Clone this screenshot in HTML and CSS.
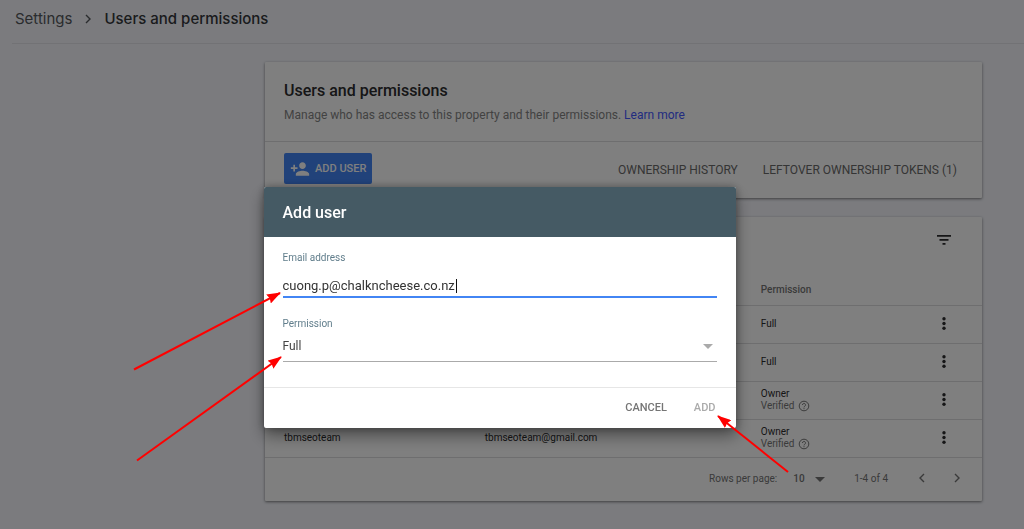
FILE: index.html
```html
<!DOCTYPE html>
<html lang="en">
<head>
<meta charset="utf-8">
<title>Users and permissions</title>
<link rel="stylesheet" href="styles.css">
</head>
<body>
<header class="topbar">
  <nav class="crumbs" aria-label="Breadcrumb">
    <a class="crumb" href="#settings">Settings</a>
    <svg class="crumb-sep" viewBox="0 0 6 10" aria-hidden="true"><path d="M1 1l4 4-4 4" fill="none" stroke="currentColor" stroke-width="1.400"/></svg>
    <span class="crumb current">Users and permissions</span>
  </nav>
</header>
<main class="content">
  <section class="card">
    <div class="intro">
      <h1 class="title">Users and permissions</h1>
      <p class="lead">Manage who has access to this property and their permissions. <a class="link" href="#learn">Learn more</a></p>
    </div>
    <div class="actions">
      <button class="add-user" type="button">
        <svg class="add-icon" viewBox="0 0 24 24" aria-hidden="true"><path fill="currentColor" d="M15 12c2.210 0 4-1.790 4-4s-1.790-4-4-4-4 1.790-4 4 1.790 4 4 4zm-9-2V7H4v3H1v2h3v3h2v-3h3v-2H6zm9 4c-2.670 0-8 1.340-8 4v2h16v-2c0-2.660-5.330-4-8-4z"/></svg>
        ADD USER
      </button>
      <button class="text-button wide history" type="button">OWNERSHIP HISTORY</button>
      <button class="text-button wide" type="button">LEFTOVER OWNERSHIP TOKENS (1)</button>
    </div>
  </section>
  <section class="card">
    <div class="filter-bar">
      <button class="icon-button" type="button" aria-label="Filter"><svg class="icon" viewBox="0 0 20 20" aria-hidden="true"><path fill="currentColor" d="M3 5h14v1.700H3zM5.500 9h9v1.700h-9zM8.500 13h3v1.700h-3z"/></svg></button>
    </div>
    <table class="users">
      <colgroup><col class="col-name"><col class="col-email"><col><col class="col-menu"></colgroup>
      <thead>
        <tr><td></td><td></td><th scope="col">Permission</th><td></td></tr>
      </thead>
      <tbody>
        <tr><td></td><td></td><td>Full</td><td><button class="icon-button" type="button" aria-label="More"><svg class="icon" viewBox="0 0 20 20" aria-hidden="true"><g fill="currentColor"><circle cx="10" cy="4.800" r="1.700"/><circle cx="10" cy="9.500" r="1.700"/><circle cx="10" cy="14.200" r="1.700"/></g></svg></button></td></tr>
        <tr><td></td><td></td><td>Full</td><td><button class="icon-button" type="button" aria-label="More"><svg class="icon" viewBox="0 0 20 20" aria-hidden="true"><g fill="currentColor"><circle cx="10" cy="4.800" r="1.700"/><circle cx="10" cy="9.500" r="1.700"/><circle cx="10" cy="14.200" r="1.700"/></g></svg></button></td></tr>
        <tr><td></td><td></td><td>Owner<span class="verified">Verified <svg class="help" viewBox="0 0 12 12" aria-hidden="true"><circle cx="6" cy="6" r="4.800"/><path d="M4.500 5a1.500 1.500 0 1 1 2.300 1.200C6.200 6.600 6 6.800 6 7.400M6 8.200v1"/></svg></span></td><td><button class="icon-button" type="button" aria-label="More"><svg class="icon" viewBox="0 0 20 20" aria-hidden="true"><g fill="currentColor"><circle cx="10" cy="4.800" r="1.700"/><circle cx="10" cy="9.500" r="1.700"/><circle cx="10" cy="14.200" r="1.700"/></g></svg></button></td></tr>
        <tr><td>tbmseoteam</td><td>tbmseoteam@gmail.com</td><td>Owner<span class="verified">Verified <svg class="help" viewBox="0 0 12 12" aria-hidden="true"><circle cx="6" cy="6" r="4.800"/><path d="M4.500 5a1.500 1.500 0 1 1 2.300 1.200C6.200 6.600 6 6.800 6 7.400M6 8.200v1"/></svg></span></td><td><button class="icon-button" type="button" aria-label="More"><svg class="icon" viewBox="0 0 20 20" aria-hidden="true"><g fill="currentColor"><circle cx="10" cy="4.800" r="1.700"/><circle cx="10" cy="9.500" r="1.700"/><circle cx="10" cy="14.200" r="1.700"/></g></svg></button></td></tr>
      </tbody>
    </table>
    <div class="pager">
      <label for="rows">Rows per page:</label>
      <span class="select-box rows-box">
        <select class="rows" id="rows"><option>10</option></select>
        <svg class="caret" viewBox="0 0 10 5" aria-hidden="true"><path fill="currentColor" d="M0 0h10L5 5z"/></svg>
      </span>
      <span class="range">1-4 of 4</span>
      <button class="icon-button" type="button" aria-label="Previous page"><svg class="icon" viewBox="0 0 20 20" aria-hidden="true"><path fill="none" stroke="currentColor" stroke-width="1.400" d="M12 5 8 9l4 4"/></svg></button>
      <button class="icon-button" type="button" aria-label="Next page"><svg class="icon" viewBox="0 0 20 20" aria-hidden="true"><path fill="none" stroke="currentColor" stroke-width="1.400" d="m8 5 4 4-4 4"/></svg></button>
    </div>
  </section>
</main>
<div class="scrim">
  <form class="dialog" role="dialog" aria-labelledby="dialog-title">
    <h2 class="dialog-title" id="dialog-title">Add user</h2>
    <div class="fields">
      <label class="label" for="email">Email address</label>
      <input class="email" id="email" type="text" value="cuong.p@chalkncheese.co.nz" autocomplete="off" spellcheck="false">
      <span class="caret-line"></span>
      <label class="label" for="permission">Permission</label>
      <span class="select-box permission-box">
        <select class="permission" id="permission"><option>Full</option></select>
        <svg class="caret" viewBox="0 0 10 5" aria-hidden="true"><path fill="currentColor" d="M0 0h10L5 5z"/></svg>
      </span>
    </div>
    <div class="dialog-actions">
      <button class="text-button" type="button">CANCEL</button>
      <button class="text-button" type="submit" disabled>ADD</button>
    </div>
  </form>
</div>
<svg class="arrows" width="1024" height="529" viewBox="0 0 1024 529" aria-hidden="true">
  <defs><marker id="head" viewBox="0 0 14 10" refX="13" refY="5" markerWidth="14" markerHeight="10" markerUnits="userSpaceOnUse" orient="auto"><path d="M0 0 14 5 0 10 1.500 5z" fill="#f00"/></marker></defs>
  <g stroke="#f00" stroke-width="2">
    <path d="M134 369.500 280 293" marker-end="url(#head)"/>
    <path d="M137 460.500 281 357" marker-end="url(#head)"/>
    <path d="M788 472 718 416" marker-end="url(#head)"/>
  </g>
</svg>
</body>
</html>
```
FILE: styles.css
```css
* { box-sizing: border-box; }
body {
  margin: 0;
  min-height: 100vh;
  background: #f6f7fd;
  color: #2c2c2e;
  font: 10px/12px Roboto, sans-serif;
}
button, select, input { font: inherit; color: inherit; border: 0; background: none; padding: 0; margin: 0; }

.topbar { margin-left: 12px; height: 44px; border-bottom: 1px solid #e4e5ea; }
.crumbs { display: flex; align-items: center; gap: 13px; height: 38px; padding-left: 3px; }
.crumb { font: 15px/20px Inter, sans-serif; color: #55585c; text-decoration: none; }
.crumb.current { font-weight: 500; color: #35373b; }
.crumb-sep { width: 6px; height: 10px; color: #55585c; }

.content { display: flex; flex-direction: column; gap: 19px; padding: 18px 42px 28px 265px; }
.card { background: #fff; border-radius: 1px; box-shadow: 0 1px 3px rgba(0, 0, 0, .5); }
.intro { padding: 18px 19px 17px; border-bottom: 1px solid #dcdcde; }
.title { margin: 0; font-size: 16px; line-height: 22px; font-weight: 500; }
.lead { margin: 4px 0 0; font-size: 12px; line-height: 18px; color: #858585; }
.link { color: #4458ff; text-decoration: none; }
.actions { display: flex; align-items: center; gap: 25px; padding: 11px 25px 14px 19px; }
.add-user {
  display: flex; align-items: center; gap: 5px;
  height: 31px; padding: 0 6px;
  border-radius: 2px; background: #4285f4; color: #fff;
  font-size: 11px; font-weight: 500;
}
.add-icon { width: 20px; height: 20px; }
.text-button { font-size: 11px; line-height: 16px; font-weight: 500; color: #757575; }
.text-button.wide { font-size: 12px; font-weight: 400; color: #6a6a6a; padding-top: 2px; }
.history { margin-left: auto; }

.filter-bar { display: flex; justify-content: flex-end; padding: 13px 28px 0 0; height: 56px; }
.icon-button { display: block; width: 20px; height: 20px; }
.icon { display: block; width: 20px; height: 20px; }
.users { width: 100%; border-collapse: collapse; table-layout: fixed; }
.col-name { width: 28%; }
.col-email { width: 276px; }
.col-menu { width: 48px; }
.users td, .users th { height: 38px; padding: 0 0 0 19px; border-bottom: 1px solid #dcdcde; text-align: left; }
.users thead td, .users thead th { height: 32px; padding-top: 2px; color: #757575; font-weight: 500; }
.users td:last-child { padding: 0; }
.verified { display: flex; align-items: center; gap: 3px; color: #777; }
.help { width: 12px; height: 12px; fill: none; stroke: currentColor; stroke-width: 1; }

.pager { display: flex; align-items: center; height: 43px; padding-right: 15px; justify-content: flex-end; color: #757575; }
.select-box { display: grid; align-items: center; }
.select-box > * { grid-area: 1 / 1; }
.select-box select { appearance: none; width: 100%; }
.select-box .caret { width: 10px; height: 5px; justify-self: end; pointer-events: none; }
.rows-box { width: 32px; margin: 0 29px 0 16px; }
.rows { font-weight: 500; }
.range { margin-right: 24px; }
.pager .icon-button + .icon-button { margin-left: 15px; }

.scrim {
  position: fixed; inset: 0;
  display: flex; justify-content: center; align-items: flex-start;
  padding: 187px 25px 0 0;
  background: rgba(0, 0, 0, .5);
}
.dialog {
  width: 472px; overflow: hidden;
  background: #fff; border-radius: 2px;
  box-shadow: 0 8px 16px rgba(0, 0, 0, .4), 0 0 8px rgba(0, 0, 0, .3);
}
.dialog-title {
  margin: 0; padding: 15px 19px 13px;
  background: #455a64; color: #fff;
  font-size: 16px; line-height: 22px; font-weight: 500;
}
.fields { display: grid; padding: 14px 19px 25px; }
.label { font-size: 10px; line-height: 14px; color: #607d8b; }
.email, .caret-line { grid-area: 2 / 1; }
.email {
  width: 100%; height: 33px; margin-bottom: 19px; padding-top: 10px;
  border-bottom: 2px solid #4285f4; border-radius: 0;
  font-size: 13px; color: #333; outline: 0;
}
.caret-line { width: 1px; height: 14px; margin: 14px 0 0 173px; background: #111; }
.permission-box { height: 31px; border-bottom: 1px solid #aaa; color: #aaa; }
.permission-box .caret { margin-right: 4px; }
.permission { font-size: 12px; line-height: 16px; color: #444; }
.dialog-actions {
  display: flex; justify-content: flex-end; align-items: center; gap: 27px;
  height: 41px; padding-right: 20px; border-top: 1px solid #e6e6e6;
}
.text-button:disabled { color: #aaa; }

.arrows { position: absolute; top: 0; left: 0; pointer-events: none; }
```
